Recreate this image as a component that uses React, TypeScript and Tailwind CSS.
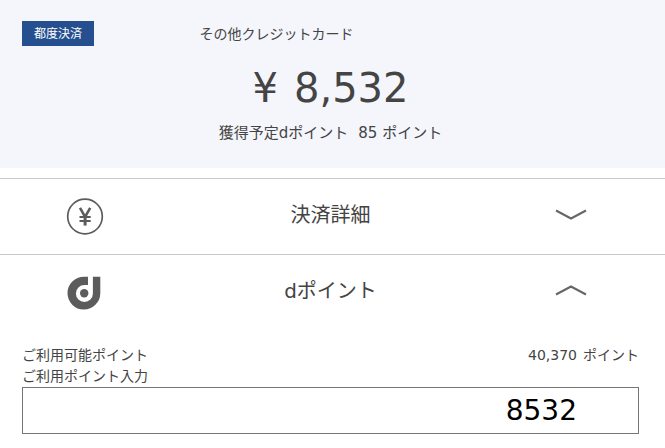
import { useState, type ReactNode } from 'react';

function YenIcon() {
  return (
    <svg width="38" height="38" viewBox="0 0 38 38" fill="none" stroke="#5c5c5c" aria-hidden="true">
      <circle cx="19" cy="18.5" r="17.3" strokeWidth="1.7" />
      <path d="M14 9.8l5.1 9L24.2 9.8" strokeWidth="2.6" />
      <path d="M19.1 18v9.6" strokeWidth="3" />
      <path d="M13.5 19h11.2M13.5 23h11.2" strokeWidth="2" />
    </svg>
  );
}

function DPointIcon() {
  return (
    <svg width="38" height="38" viewBox="0 0 38 38" aria-hidden="true">
      <path
        d="M22 2.7v8.2h-3.6a8.5 8.5 0 1 0 8.5 8.5V2.7h7.4v16.6a16.4 16.4 0 1 1-16.4-16.6z"
        fill="#5c5c5c"
      />
      <circle cx="18.2" cy="19.2" r="4.2" fill="#5c5c5c" />
    </svg>
  );
}

function Chevron({ open }: { open: boolean }) {
  return (
    <svg width="32" height="12" viewBox="0 0 32 12" fill="none" stroke="#666" strokeWidth="2" aria-hidden="true">
      <path d={open ? 'M1 9.5l15-8 15 8' : 'M1 1.5l15 8 15-8'} />
    </svg>
  );
}

type SectionProps = {
  title: string;
  icon: ReactNode;
  open: boolean;
  onToggle: () => void;
  children: ReactNode;
};

function Section({ title, icon, open, onToggle, children }: SectionProps) {
  return (
    <section className="border-t border-[#c8c8c8]">
      <button
        type="button"
        aria-expanded={open}
        onClick={onToggle}
        className="grid h-[75px] w-full grid-cols-[168px_1fr_172px] items-center text-xl"
      >
        <span className="flex pl-[66px]">{icon}</span>
        <span className="pb-1 text-center">{title}</span>
        <span className="flex pb-1 pl-[62px]">
          <Chevron open={open} />
        </span>
      </button>
      {open ? children : null}
    </section>
  );
}

export default function App() {
  const [detailOpen, setDetailOpen] = useState(false);
  const [pointOpen, setPointOpen] = useState(true);
  const [points, setPoints] = useState('8532');

  return (
    <main
      lang="ja"
      className="bg-white font-['DejaVu_Sans','Noto_Sans_CJK_JP',sans-serif] text-[#444]"
    >
      <header className="bg-[#f4f6fb] pt-[21px] pb-6">
        <div className="flex items-center">
          <div className="w-[30%] pl-[22px]">
            <span className="flex h-[25px] w-[72px] items-center justify-center bg-[#254f8f] text-xs text-white">
              都度決済
            </span>
          </div>
          <div className="text-sm">その他クレジットカード</div>
        </div>
        <div className="mt-4 flex justify-center gap-4 pr-1 text-[40px] leading-[52px]">
          <span>¥</span>
          <span>8,532</span>
        </div>
        <div className="mt-2 flex justify-center gap-[10px] pr-1 text-[15px] leading-[22px]">
          <span>獲得予定dポイント</span>
          <span>85 ポイント</span>
        </div>
      </header>

      <div className="mt-[10px]">
        <Section
          title="決済詳細"
          icon={<YenIcon />}
          open={detailOpen}
          onToggle={() => setDetailOpen((v) => !v)}
        >
          <div className="px-[22px] pb-4 text-sm">その他クレジットカード</div>
        </Section>

        <Section
          title="dポイント"
          icon={<DPointIcon />}
          open={pointOpen}
          onToggle={() => setPointOpen((v) => !v)}
        >
          <div className="pt-[15px] pr-[26px] pb-3 pl-[22px] text-sm leading-[21px]">
            <div className="flex justify-between">
              <span>ご利用可能ポイント</span>
              <span className="flex gap-[6px]">
                <span>40,370</span>
                <span>ポイント</span>
              </span>
            </div>
            <label htmlFor="use-points" className="block">
              ご利用ポイント入力
            </label>
            <input
              id="use-points"
              type="text"
              inputMode="numeric"
              value={points}
              onChange={(e) => setPoints(e.target.value)}
              className="block h-[47px] w-full border border-[#767676] bg-white pr-[61px] text-right text-[28px] text-black"
            />
          </div>
        </Section>
      </div>
    </main>
  );
}
